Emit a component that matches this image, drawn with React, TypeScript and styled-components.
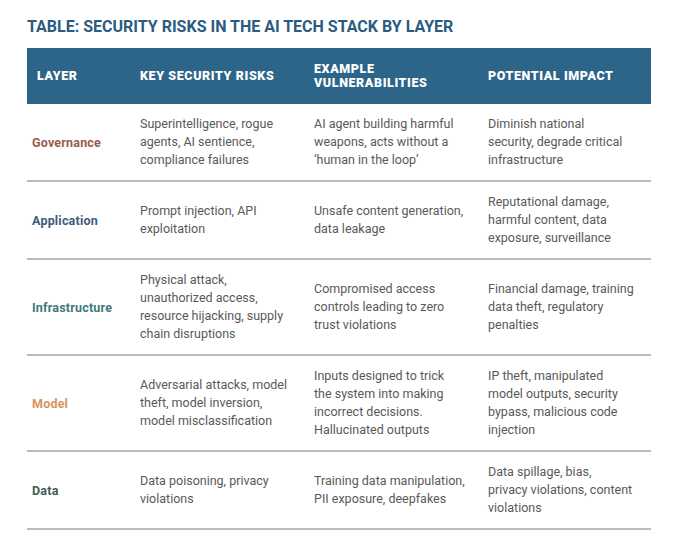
import React from 'react'
import styled, { createGlobalStyle } from 'styled-components'

const GlobalStyle = createGlobalStyle`
	body {
		margin: 0;
		background: #ffffff;
		font-family: Roboto, 'Liberation Sans', sans-serif;
	}
`

type Row = {
	layer: string
	color: string
	risks: string
	vulnerabilities: string
	impact: string
}

// line breaks follow the printed table
const rows: Row[] = [
	{
		layer: 'Governance',
		color: '#9b5b4e',
		risks: 'Superintelligence, rogue\nagents, AI sentience,\ncompliance failures',
		vulnerabilities: 'AI agent building harmful\nweapons, acts without a\n\u2018human in the loop\u2019',
		impact: 'Diminish national\nsecurity, degrade critical\ninfrastructure',
	},
	{
		layer: 'Application',
		color: '#3e5c7e',
		risks: 'Prompt injection, API\nexploitation',
		vulnerabilities: 'Unsafe content generation,\ndata leakage',
		impact: 'Reputational damage,\nharmful content, data\nexposure, surveillance',
	},
	{
		layer: 'Infrastructure',
		color: '#41777b',
		risks: 'Physical attack,\nunauthorized access,\nresource hijacking, supply\nchain disruptions',
		vulnerabilities: 'Compromised access\ncontrols leading to zero\ntrust violations',
		impact: 'Financial damage, training\ndata theft, regulatory\npenalties',
	},
	{
		layer: 'Model',
		color: '#d4965e',
		risks: 'Adversarial attacks, model\ntheft, model inversion,\nmodel misclassification',
		vulnerabilities: 'Inputs designed to trick\nthe system into making\nincorrect decisions.\nHallucinated outputs',
		impact: 'IP theft, manipulated\nmodel outputs, security\nbypass, malicious code\ninjection',
	},
	{
		layer: 'Data',
		color: '#3e5e50',
		risks: 'Data poisoning, privacy\nviolations',
		vulnerabilities: 'Training data manipulation,\nPII exposure, deepfakes',
		impact: 'Data spillage, bias,\nprivacy violations, content\nviolations',
	},
]

const App = () => {
	return (
		<Page>
			<GlobalStyle />
			<Title>TABLE: SECURITY RISKS IN THE AI TECH STACK BY LAYER</Title>
			<Table>
				<HeaderRow>
					<HeadCell>LAYER</HeadCell>
					<HeadCell>KEY SECURITY RISKS</HeadCell>
					<HeadCell>
						EXAMPLE
						<br />
						VULNERABILITIES
					</HeadCell>
					<HeadCell>POTENTIAL IMPACT</HeadCell>
				</HeaderRow>
				{rows.map((row) => (
					<BodyRow key={row.layer}>
						<LayerCell $color={row.color}>{row.layer}</LayerCell>
						<Cell>{row.risks}</Cell>
						<Cell>{row.vulnerabilities}</Cell>
						<Cell>{row.impact}</Cell>
					</BodyRow>
				))}
			</Table>
		</Page>
	)
}

export default App

const Page = styled.div`
	width: 680px;
	height: 542px;
	padding: 18px 0 0 27px;
	box-sizing: border-box;
`

const Title = styled.h1`
	margin: 0 0 12px;
	font-size: 16px;
	line-height: 18px;
	font-weight: 700;
	color: #2b5b80;
`

const Table = styled.div`
	width: 624px;
	display: flex;
	flex-direction: column;
`

const HeaderRow = styled.div`
	display: grid;
	grid-template-columns: 103px 174px 174px 173px;
	height: 56px;
	background: #2d6589;
`

const HeadCell = styled.div`
	display: flex;
	align-items: center;
	padding-left: 10px;
	color: #ffffff;
	font-size: 12.5px;
	line-height: 14px;
	font-weight: 900;
	letter-spacing: 0.6px;
`

const BodyRow = styled.div`
	display: grid;
	grid-template-columns: 103px 174px 174px 173px;
	border-bottom: 2px solid #bcbcbc;
`

const Cell = styled.div`
	display: flex;
	align-items: center;
	padding: 11px 0 11px 10px;
	color: #595959;
	font-size: 12.5px;
	line-height: 18px;
	white-space: pre-line;
`

const LayerCell = styled.div<{ $color: string }>`
	display: flex;
	align-items: center;
	padding-left: 5px;
	color: ${(p) => p.$color};
	font-size: 12.5px;
	font-weight: 700;
	letter-spacing: 0.2px;
`
